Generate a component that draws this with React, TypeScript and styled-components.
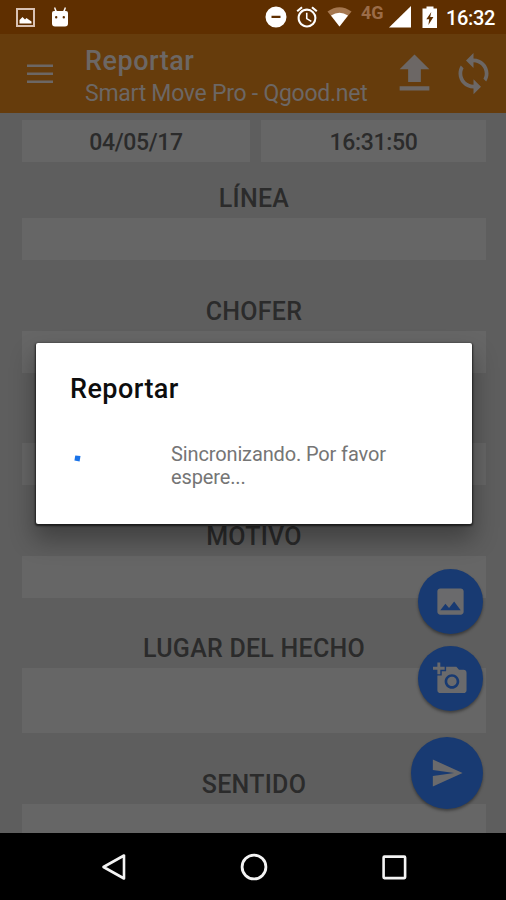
import React from "react";
import styled, { createGlobalStyle } from "styled-components";

const GlobalStyle = createGlobalStyle`
  * { box-sizing: border-box; }
  body { margin: 0; background: #000; font-family: Roboto, "Liberation Sans", sans-serif; }
`;

const Screen = styled.div`
  position: relative;
  width: 506px;
  height: 900px;
  display: flex;
  flex-direction: column;
  overflow: hidden;
  background: #5e5e5e;
`;

const StatusBar = styled.header`
  flex: none;
  height: 34px;
  padding: 0 10px 0 16px;
  display: flex;
  align-items: center;
  justify-content: space-between;
  background: #5f2f00;
  color: #fff;
`;

const StatusGroup = styled.div<{ $gap: number }>`
  display: flex;
  align-items: center;
  gap: ${(p) => p.$gap}px;
`;

const Icon = styled.svg<{ $w: number; $h?: number }>`
  display: block;
  flex: none;
  width: ${(p) => p.$w}px;
  height: ${(p) => p.$h ?? p.$w}px;
  fill: currentColor;
`;

const Network = styled.span`
  width: 24px;
  margin: 0 4px 9px 9px;
  font-size: 18px;
  line-height: 18px;
  font-weight: 700;
  color: #9b6c48;
`;

const Clock = styled.span`
  width: 50px;
  margin: 1px 0 0 8px;
  font-size: 20px;
  line-height: 24px;
  font-weight: 500;
  letter-spacing: -0.35px;
`;

const AppBar = styled.div`
  flex: none;
  height: 79px;
  padding: 0 10px 0 27px;
  display: flex;
  align-items: center;
  gap: 11px;
  background: #663c0c;
  color: #6c6765;
`;

const Titles = styled.div`
  flex: 1;
  margin: 6px 0 0 21px;
  white-space: nowrap;
`;

const Title = styled.h1`
  margin: 0;
  font-size: 27px;
  line-height: 34px;
  font-weight: 500;
  letter-spacing: 0.5px;
`;

const Subtitle = styled.div`
  font-size: 23px;
  line-height: 32px;
  letter-spacing: -0.26px;
`;

const Form = styled.main`
  flex: 1;
  min-height: 0;
  overflow: hidden;
  padding: 7px 20px 0 22px;
  display: flex;
  flex-direction: column;
  color: #2b2b2b;
`;

const DateRow = styled.div`
  flex: none;
  display: grid;
  grid-template-columns: 228px 225px;
  justify-content: space-between;
  margin-bottom: 14px;
`;

const Value = styled.div`
  height: 42px;
  background: #666;
  text-align: center;
  font-size: 23px;
  line-height: 45px;
  font-weight: 500;
  letter-spacing: -0.35px;
`;

const Field = styled.section<{ $space?: number }>`
  flex: none;
  margin-bottom: ${(p) => p.$space ?? 28.6}px;
`;

const Label = styled.div`
  height: 42px;
  font-size: 25px;
  line-height: 45px;
  font-weight: 500;
  letter-spacing: 0.25px;
  text-align: center;
`;

const Input = styled.div<{ $h?: number }>`
  height: ${(p) => p.$h ?? 42}px;
  background: #666;
`;

const Actions = styled.div`
  position: absolute;
  right: 23px;
  top: 568.5px;
  display: flex;
  flex-direction: column;
  align-items: flex-end;
`;

const Fab = styled.button<{ $size: number; $after?: number }>`
  width: ${(p) => p.$size}px;
  height: ${(p) => p.$size}px;
  margin: 0 0 ${(p) => p.$after ?? 0}px;
  padding: 0;
  border: 0;
  border-radius: 50%;
  display: flex;
  align-items: center;
  justify-content: center;
  background: #183a72;
  color: #6a6a6c;
  box-shadow: 0 2px 3px rgba(0, 0, 0, 0.38);
`;

const Dialog = styled.div`
  position: absolute;
  left: 36px;
  top: 343px;
  width: 435.5px;
  height: 181px;
  padding: 29px 34px 0;
  border-radius: 2px;
  background: #fff;
  box-shadow: 0 1px 2px 1px rgba(0, 0, 0, 0.6), 0 14px 24px 2px rgba(0, 0, 0, 0.32);
`;

const DialogTitle = styled.h2`
  margin: 0;
  font-size: 27px;
  line-height: 34px;
  font-weight: 500;
  letter-spacing: 0.45px;
  color: #0d0d0d;
`;

const Progress = styled.div`
  display: flex;
  margin-top: 37px;
`;

const Spinner = styled.div`
  width: 101px;
  padding: 12px 0 0 4px;
  color: #1a73e8;
`;

const Message = styled.p`
  margin: 0;
  width: 230px;
  font-size: 20px;
  line-height: 23px;
  letter-spacing: -0.13px;
  color: #757575;
`;

const NavBar = styled.nav`
  flex: none;
  height: 67px;
  padding: 0 98px 0 99.5px;
  display: flex;
  align-items: center;
  justify-content: space-between;
  background: #000;
  color: #f4f4f4;
`;

export default function App() {
  return (
    <>
      <GlobalStyle />
      <Screen>
        <StatusBar>
          <StatusGroup $gap={16}>
            <Icon $w={19} viewBox="0 0 19 19">
              <path d="M1 1h17v17H1z" fill="none" stroke="#d9c2b4" strokeWidth="2" />
              <path d="M3.500 15.500V12l3-3 2.500 2.500 1.500-1.500 2 1.500 3 2v2z" />
            </Icon>
            <Icon $w={18} $h={20} viewBox="0 0 18 20">
              <path
                fillRule="evenodd"
                d="M3 4h1L3 .8 4.200.3 5.800 4h6.400L13.800.3l1.200.5L14 4h1q2 0 2 2v10.500q0 3-3 3H4q-3 0-3-3V6q0-2 2-2zM4 10.300a1.200 1.200 0 1 0 2.400 0 1.200 1.200 0 1 0-2.400 0zM11.600 10.300a1.200 1.200 0 1 0 2.400 0 1.200 1.200 0 1 0-2.400 0z"
              />
            </Icon>
          </StatusGroup>
          <StatusGroup $gap={0}>
            <StatusGroup $gap={9}>
              <Icon $w={22} viewBox="1 1 22 22">
                <path d="M12 1.500a10.500 10.500 0 1 0 0 21 10.500 10.500 0 0 0 0-21zm4.500 11.500h-9v-2.200h9z" />
              </Icon>
              <Icon $w={22} viewBox="1.500 1.500 21 21">
                <path d="M22 5.720l-4.600-3.860-1.290 1.530 4.600 3.860L22 5.720zM7.880 3.390L6.600 1.860 2 5.710l1.290 1.530 4.590-3.850zM12.500 8H11v6l4.750 2.850.75-1.230-4-2.370V8zM12 4c-4.970 0-9 4.030-9 9s4.020 9 9 9a9 9 0 0 0 0-18zm0 16c-3.870 0-7-3.130-7-7s3.130-7 7-7 7 3.130 7 7-3.130 7-7 7z" />
              </Icon>
              <Icon $w={25} $h={20} viewBox="0 0 25 20">
                <path d="M.5 4.500Q12.500-4 24.500 4.500L12.500 19.500z" fill="#a5774f" />
                <path d="M4 8.500Q12.500 3 21 8.500L12.500 19.500z" />
              </Icon>
            </StatusGroup>
            <Network>4G</Network>
            <Icon $w={22} viewBox="0 0 22 22">
              <path d="M22 0v21.500H0z" />
            </Icon>
            <Icon $w={27} $h={22} viewBox="0 0 27 22">
              <path
                fillRule="evenodd"
                d="M15.500 2.500V.5h7v2h3.500V22H11.500V2.500zM20.300 6l-5 7.200h2.900l-.8 5.800 5-8h-3.200z"
              />
            </Icon>
            <Clock>16:32</Clock>
          </StatusGroup>
        </StatusBar>

        <AppBar>
          <Icon $w={26} $h={20} viewBox="0 0 26 20">
            <path d="M0 .5h26V3H0zM0 8.500h26V11H0zM0 16.500h26V19H0z" />
          </Icon>
          <Titles>
            <Title>Reportar</Title>
            <Subtitle>Smart Move Pro - Qgood.net</Subtitle>
          </Titles>
          <Icon $w={51} viewBox="0 0 24 24">
            <path d="M9 16h6v-6h4l-7-7-7 7h4zm-4 2h14v2H5z" />
          </Icon>
          <Icon $w={45} viewBox="0 0 24 24">
            <path d="M12 4V1L8 5l4 4V6c3.310 0 6 2.690 6 6 0 1.010-.25 1.970-.7 2.800l1.460 1.460C19.540 15.030 20 13.570 20 12c0-4.420-3.580-8-8-8zm0 14c-3.310 0-6-2.690-6-6 0-1.010.25-1.970.7-2.800L5.240 7.740C4.460 8.970 4 10.430 4 12c0 4.420 3.580 8 8 8v3l4-4-4-4v3z" />
          </Icon>
        </AppBar>

        <Form>
          <DateRow>
            <Value>04/05/17</Value>
            <Value>16:31:50</Value>
          </DateRow>
          <Field>
            <Label>LÍNEA</Label>
            <Input />
          </Field>
          <Field>
            <Label>CHOFER</Label>
            <Input />
          </Field>
          <Field>
            <Label />
            <Input />
          </Field>
          <Field>
            <Label>MOTIVO</Label>
            <Input />
          </Field>
          <Field>
            <Label>LUGAR DEL HECHO</Label>
            <Input $h={65} />
          </Field>
          <Field $space={0}>
            <Label>SENTIDO</Label>
            <Input />
          </Field>
        </Form>

        <NavBar>
          <Icon $w={28} viewBox="0 0 28 28">
            <path d="M24 2.500v23L3.500 14z" fill="none" stroke="currentColor" strokeWidth="2.600" strokeLinejoin="round" />
          </Icon>
          <Icon $w={28} viewBox="0 0 28 28">
            <circle cx="14" cy="14" r="11.900" fill="none" stroke="currentColor" strokeWidth="2.800" />
          </Icon>
          <Icon $w={28} viewBox="0 0 28 28">
            <rect x="3.600" y="3.600" width="21.500" height="21.500" rx="0.800" fill="none" stroke="currentColor" strokeWidth="2.600" />
          </Icon>
        </NavBar>

        <Actions>
          <Fab $size={65} $after={12}>
            <Icon $w={35} viewBox="0 0 24 24">
              <path d="M21 19V5c0-1.100-.9-2-2-2H5c-1.100 0-2 .9-2 2v14c0 1.100.9 2 2 2h14c1.100 0 2-.9 2-2zM8.500 13.500l2.500 3.010L14.500 12l4.500 6H5l3.500-4.500z" />
            </Icon>
          </Fab>
          <Fab $size={65} $after={26}>
            <Icon $w={35} viewBox="0 0 24 24">
              <path d="M3 4V1h2v3h3v2H5v3H3V6H0V4h3zm3 6V7h3V4h7l1.830 2H21c1.100 0 2 .9 2 2v12c0 1.100-.9 2-2 2H5c-1.100 0-2-.9-2-2V10h3zm7 9c2.760 0 5-2.240 5-5s-2.240-5-5-5-5 2.240-5 5 2.240 5 5 5zm-3.200-5c0 1.770 1.430 3.200 3.200 3.200s3.200-1.430 3.200-3.200-1.430-3.200-3.200-3.200-3.200 1.430-3.200 3.200z" />
            </Icon>
          </Fab>
          <Fab $size={72}>
            <Icon $w={34} $h={36} viewBox="0 0 24 24" preserveAspectRatio="none">
              <path d="M2.010 21L23 12 2.010 3 2 10l15 2-15 2z" />
            </Icon>
          </Fab>
        </Actions>

        <Dialog role="dialog">
          <DialogTitle>Reportar</DialogTitle>
          <Progress>
            <Spinner>
              <Icon $w={7} viewBox="0 0 7 7">
                <path d="M1.300.6l5.200.4-.9 5.600L.4 5.500z" />
              </Icon>
            </Spinner>
            <Message>Sincronizando. Por favor espere...</Message>
          </Progress>
        </Dialog>
      </Screen>
    </>
  );
}
